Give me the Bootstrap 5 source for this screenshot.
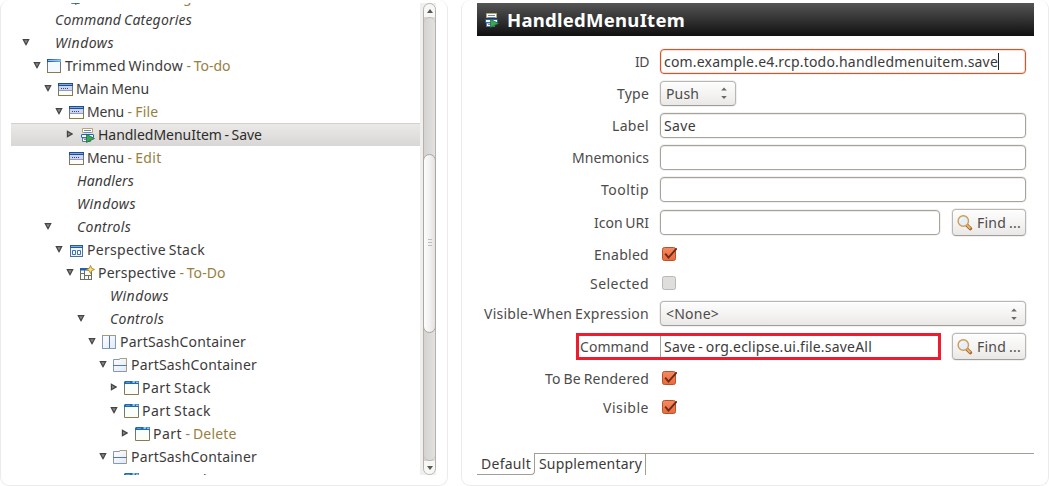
<!DOCTYPE html>
<html lang="en">
<head>
<meta charset="utf-8">
<meta name="viewport" content="width=device-width, initial-scale=1">
<title>Application model editor</title>
<link href="https://cdn.jsdelivr.net/npm/bootstrap@5.3.0/dist/css/bootstrap.min.css" rel="stylesheet">
<style>
body{font-family:"Noto Sans","Open Sans",sans-serif;font-size:14px;line-height:23px;word-spacing:-1px;color:#3c3b3a;background:#fff;height:486px}
.pane{border:1px solid #ebebeb;border-top:0;border-radius:9px;height:486px;background:#fff}
.pane-tree{width:448px;padding:3px 10px 10px 10px}
.pane-form{width:588px;margin-left:13px;padding:3px 14px 11px 15px}
.tree{width:409px;height:472px}
.tree-body{margin-top:-18px}
.tree-row{height:23px;white-space:pre}
.tree-row.active{background:linear-gradient(#ebeae9,#d9d7d5);box-shadow:inset 0 1px 0 #d2d1cf;color:#2d2c2b}
.arrow{width:8px;height:8px;margin:0 5px 2px 0}
.pic{width:16px;height:16px;margin-right:3px}
.fst-italic{padding-left:1px}
.dim{color:#97803f;margin-left:3.5px}
.scroller{width:16px;height:472px;background:#f0efee;padding-left:3px}
.track{width:13px;height:472px;border:1px solid #b5b1ac;border-radius:7px;background:linear-gradient(90deg,#d5d3d1,#e2e1df)}
.cap{height:13px;background:#f7f7f6;color:#5a5855}
.cap-up{border-radius:6px 6px 0 0}
.cap-down{border-radius:0 0 6px 6px}
.groove{height:444px;border:1px solid #bdbab6;border-width:1px 0;border-radius:6px;padding-top:136px;background:linear-gradient(90deg,#d5d3d1,#e2e1df)}
.thumb{height:179px;border:1px solid #aaa6a0;border-radius:7px;margin:0 -1px;background:linear-gradient(90deg,#fdfdfd,#f3f2f2 50%,#e3e1e0)}
.title-bar{height:33px;background:linear-gradient(#555,#101010);color:#fff;font-weight:700;font-size:18.5px;padding-left:6px;white-space:pre}
.form-area{padding-top:9px;height:417px}
.f-row{height:32px}
.h33{height:33px}.h30{height:30px}.h28{height:28px}
.f-label{width:172px;margin-right:11px;text-align:right;white-space:pre;color:#4c4b4a}
.field{width:366px;height:25px;border:1px solid #a5a49b;border-radius:4px;box-shadow:0 0 0 1px #f3f2f1,inset 0 1px 0 #ecebea;background:#fff;padding-left:3px;white-space:pre}
.field.short{width:280px}
.field.focus{border-color:#d0572b;box-shadow:0 0 0 1px #f3f2f1,inset 0 0 0 1px #fae0d6}
.caret{width:1px;height:17px;background:#222}
.combo,.find{border:1px solid #b9b7b3;border-bottom-color:#a09e9a;border-radius:4px;background:linear-gradient(#fdfdfd,#f3f2f1 60%,#e9e8e7);box-shadow:0 0 0 1px #f1f0ef,inset 0 1px 0 #fff;color:#4c4b4a;white-space:pre}
.combo{height:25px;width:366px;padding:0 7px 0 5px}
.combo.tiny{width:76px}
.find{width:74px;height:27px;margin-left:12px;padding-left:4px}
.find svg{margin-right:4px}
.tick{width:16px;height:16px;margin-left:1px}
.marked{height:27px;border:3px solid #ee1c2e;width:365px;margin-left:99px}
.marked + .find{margin-left:11px}
.marked .f-label{width:70px;margin-right:11px}
.marked .val{border-left:1px solid #a5a49b;height:21px;line-height:21px;padding-left:3px;white-space:pre}
.tabs{height:22px;white-space:pre}
.tab-on{width:58px;height:22px;line-height:21px;border:1px solid #a19e96;border-width:0 1px 1px 0;border-bottom-right-radius:4px;padding-left:4px}
.tab-off{width:111px;height:22px;line-height:20px;border:1px solid #a19e96;border-width:1px 1px 0 0;padding-left:4px}
.tab-rest{border-top:1px solid #a19e96}
</style>
</head>
<body class="d-flex overflow-hidden">

<svg width="0" height="0" class="position-absolute" aria-hidden="true">
  <defs>
    <linearGradient id="gBlue" x2="1" y2="0"><stop stop-color="#1c4f94"/><stop offset="1" stop-color="#6fb2e8"/></linearGradient>
    <linearGradient id="gEdge" x2="0" y2="1"><stop stop-color="#4a77a8"/><stop offset="1" stop-color="#8a7a4c"/></linearGradient>
    <linearGradient id="gPane" x2="1" y2="1"><stop stop-color="#fff"/><stop offset="1" stop-color="#dfe9f6"/></linearGradient>
    <linearGradient id="gOrange" x2="0" y2="1"><stop stop-color="#f58a62"/><stop offset="1" stop-color="#ea6a3c"/></linearGradient>
    <symbol id="down" viewBox="0 0 8 8"><path d="M.3 1h7.4L4.3 7.4h-.6z" fill="#444"/><path d="M2.2 2.2h3.6L4 5.6z" fill="#8a8886"/></symbol>
    <symbol id="right" viewBox="0 0 8 8"><path d="M.8.3v7.4L7 4.3v-.6z" fill="#444"/><path d="M2 2.4v3.2L4.9 4z" fill="#8a8886"/></symbol>
    <symbol id="window" viewBox="0 0 16 16"><rect x="1.5" y="1.5" width="13" height="13" fill="#f3faff" stroke="url(#gEdge)"/><path d="M1 1h14v3H1z" fill="url(#gBlue)"/><path d="M2 2h12v1H2z" fill="#8dc0ea"/></symbol>
    <symbol id="menu" viewBox="0 0 16 16"><rect x="1.5" y="2.5" width="14" height="12" fill="#fbfdf6" stroke="url(#gEdge)"/><path d="M1 2h15v3H1z" fill="#1e4e94"/><path d="M2 3h13v1H2z" fill="#78a9dc"/><path d="M2 5h13v5H2z" fill="#cfd3ee"/><path d="M2 9.5h13" stroke="#8f9cc4"/><path d="M4 7h1v1H4zM6 7h1v1H6zM8 7h1v1H8zM10 7h1v1h-1z" fill="#33437c"/></symbol>
    <symbol id="item" viewBox="0 0 16 16"><path d="M3.5 1.5h10v4h-10z" fill="#fff" stroke="#b8a76c"/><path d="M5 3h7v1H5zM5 5h7v1H5z" fill="#6d86bf"/><rect x="2.5" y="7.5" width="12" height="3" rx=".5" fill="#f4f8ff" stroke="#1e62b4"/><path d="M3.5 11v3.500h8v-3.500z" fill="#fff" stroke="#5e789e"/><path d="M5 12.500h3" stroke="#6d86bf"/><path d="M7.500 7.300l8 4.200-8 3.900z" fill="#3fa457" stroke="#16733a" stroke-width=".8"/></symbol>
    <symbol id="pstack" viewBox="0 0 16 16"><rect x="2.500" y="3.500" width="12" height="11" fill="#eef5fc" stroke="#4e7196"/><path d="M2 3h13v3H2z" fill="#255b9c"/><path d="M3 4h11v1H3z" fill="#7fb1e0"/><path d="M4.500 8.500h3v4h-3zM9.500 8.500h3v4h-3z" fill="#fff" stroke="#3e74ad"/></symbol>
    <symbol id="persp" viewBox="0 0 16 16"><rect x="1.500" y="3.500" width="11" height="11" fill="#f3f9ff" stroke="#6e7053"/><path d="M1 3h9v2.500H1z" fill="#2260ac"/><path d="M5.500 5v9.500M1.500 8.500h4M5.500 10.500h7M9.500 10v4.500" stroke="#6e7053" fill="none"/><path d="M11.500.5l1.200 2.800 2.800 1.200-2.800 1.200-1.200 2.800-1.200-2.800-2.800-1.200 2.800-1.200z" fill="#fbe38a" stroke="#b48413" stroke-width=".9"/></symbol>
    <symbol id="sashv" viewBox="0 0 16 16"><rect x="1.500" y="1.500" width="13" height="13" fill="url(#gPane)" stroke="#8498ba"/><path d="M1 1.500h14" stroke="#a59b76"/><path d="M8.500 2v12" stroke="#5878ae"/></symbol>
    <symbol id="sashh" viewBox="0 0 16 16"><path d="M1.500 2.500h6l1-1h6v13h-13z" fill="url(#gPane)" stroke="#8498ba"/><path d="M7.500 1.500h7v13" fill="none" stroke="#aca07b"/><path d="M1 8.500h14" stroke="#5878ae"/></symbol>
    <symbol id="part" viewBox="0 0 16 16"><path d="M1.500 2.500h14v12h-14z" fill="#fafdf8" stroke="url(#gEdge)"/><path d="M1 4V2l1-1h14v3z" fill="#2468ae"/><path d="M9.500 1h3l-1 2h-2zM13 1.500h2.500V3H13z" fill="#8dc9ee"/><path d="M3 2h4v1H3z" fill="#5799d2"/></symbol>
    <symbol id="lens" viewBox="0 0 16 16"><path d="M10 10.300l3.300 3.200" stroke="#a4682e" stroke-width="3.600" stroke-linecap="round"/><path d="M9.800 9.800l3.600 3.700" stroke="#e8b777" stroke-width="1.800"/><circle cx="6.300" cy="6" r="5.200" fill="#e4effb" stroke="#d19c52" stroke-width="1.400"/><path d="M3.500 5.500c.4-1.500 1.500-2.200 3-2.200" fill="none" stroke="#fff"/></symbol>
    <symbol id="check" viewBox="0 0 16 16"><rect x="1.500" y="1.500" width="13" height="13" rx="2" fill="url(#gOrange)" stroke="#b9512b"/><path d="M4.200 7.600l3.300 4L15.700 2.300" fill="none" stroke="#6b2c18" stroke-width="1.900"/></symbol>
    <symbol id="uncheck" viewBox="0 0 16 16"><rect x="1.500" y="1.500" width="13" height="13" rx="2" fill="#dfdedd" stroke="#bab8b5"/></symbol>
    <symbol id="updown" viewBox="0 0 8 14"><path d="M4 1.500l2.800 3H1.200zM4 13l2.800-3H1.200z" fill="#6a6865"/></symbol>
  </defs>
</svg>

<section class="pane pane-tree d-flex flex-shrink-0">
  <div class="tree overflow-hidden"><div class="tree-body" id="tree"></div></div>
  <div class="scroller">
    <div class="track">
      <div class="cap cap-up d-flex align-items-center justify-content-center"><svg width="6" height="4"><path d="M3 0l3 4H0z" fill="currentColor"/></svg></div>
      <div class="groove">
        <div class="thumb d-flex align-items-center justify-content-center"><svg width="4" height="9"><path d="M0 .5h4M0 3.500h4M0 6.500h4" stroke="#c0bebb"/></svg></div>
      </div>
      <div class="cap cap-down d-flex align-items-center justify-content-center"><svg width="6" height="4"><path d="M3 4l3-4H0z" fill="currentColor"/></svg></div>
    </div>
  </div>
</section>

<section class="pane pane-form flex-shrink-0">
  <header class="title-bar d-flex align-items-center"><svg width="16" height="16" class="me-2"><use href="#item"/></svg><span data-w="178">HandledMenuItem</span></header>
  <div class="form-area">
    <div class="f-row d-flex align-items-center"><label class="f-label"><span data-w="14">ID</span></label><div class="field focus d-flex align-items-center"><span data-w="334">com.example.e4.rcp.todo.handledmenuitem.save</span><i class="caret"></i></div></div>
    <div class="f-row d-flex align-items-center"><label class="f-label"><span data-w="32">Type</span></label><div class="combo tiny d-flex align-items-center justify-content-between"><span data-w="33">Push</span><svg width="8" height="14"><use href="#updown"/></svg></div></div>
    <div class="f-row d-flex align-items-center"><label class="f-label"><span data-w="37">Label</span></label><div class="field d-flex align-items-center"><span data-w="32">Save</span></div></div>
    <div class="f-row d-flex align-items-center"><label class="f-label"><span data-w="77">Mnemonics</span></label><div class="field"></div></div>
    <div class="f-row d-flex align-items-center"><label class="f-label"><span data-w="48">Tooltip</span></label><div class="field"></div></div>
    <div class="f-row h33 mt-px d-flex align-items-center" style="margin-top:1px"><label class="f-label"><span data-w="55">Icon URI</span></label><div class="field short"></div><div class="find d-flex align-items-center"><svg width="16" height="16"><use href="#lens"/></svg><span data-w="44">Find ...</span></div></div>
    <div class="f-row h30 d-flex align-items-center"><label class="f-label"><span data-w="55">Enabled</span></label><svg class="tick"><use href="#check"/></svg></div>
    <div class="f-row h28 d-flex align-items-center"><label class="f-label"><span data-w="59">Selected</span></label><svg class="tick"><use href="#uncheck"/></svg></div>
    <div class="f-row h33 d-flex align-items-center"><label class="f-label"><span data-w="165">Visible-When Expression</span></label><div class="combo d-flex align-items-center justify-content-between"><span data-w="53">&lt;None&gt;</span><svg width="8" height="14"><use href="#updown"/></svg></div></div>
    <div class="f-row h33 d-flex align-items-center"><div class="marked d-flex align-items-center"><label class="f-label"><span data-w="69">Command</span></label><div class="val"><span data-w="208">Save - org.eclipse.ui.file.saveAll</span></div></div><div class="find d-flex align-items-center"><svg width="16" height="16"><use href="#lens"/></svg><span data-w="44">Find ...</span></div></div>
    <div class="f-row h30 d-flex align-items-center"><label class="f-label"><span data-w="104">To Be Rendered</span></label><svg class="tick"><use href="#check"/></svg></div>
    <div class="f-row h28 d-flex align-items-center"><label class="f-label"><span data-w="46">Visible</span></label><svg class="tick"><use href="#check"/></svg></div>
  </div>
  <nav class="tabs d-flex"><div class="tab-on"><span data-w="50">Default</span></div><div class="tab-off"><span data-w="103">Supplementary</span></div><div class="tab-rest flex-grow-1"></div></nav>
</section>

<script src="https://cdn.jsdelivr.net/npm/bootstrap@5.3.0/dist/js/bootstrap.bundle.min.js"></script>
<script>
// [depth, arrow, icon, text, width, suffix, suffix width, selected]
const rows = [
  [3, '', 'item', 'Command', 68, '- org', 34],
  [0, '', '', 'Command Categories', 138],
  [0, 'down', '', 'Windows', 60],
  [1, 'down', 'window', 'Trimmed Window', 118, '- To-do', 44],
  [2, 'down', 'menu', 'Main Menu', 73],
  [3, 'down', 'menu', 'Menu', 37, '- File', 31],
  [4, 'right', 'item', 'HandledMenuItem - Save', 164, '', 0, true],
  [3, '', 'menu', 'Menu', 37, '- Edit', 34],
  [2, '', '', 'Handlers', 58],
  [2, '', '', 'Windows', 60],
  [2, 'down', '', 'Controls', 55],
  [3, 'down', 'pstack', 'Perspective Stack', 118],
  [4, 'down', 'persp', 'Perspective', 78, '- To-Do', 46],
  [5, '', '', 'Windows', 60],
  [5, 'down', '', 'Controls', 55],
  [6, 'down', 'sashv', 'PartSashContainer', 126],
  [7, 'down', 'sashh', 'PartSashContainer', 126],
  [8, 'right', 'part', 'Part Stack', 69],
  [8, 'down', 'part', 'Part Stack', 69],
  [9, 'right', 'part', 'Part', 29, '- Delete', 51],
  [7, 'down', 'sashh', 'PartSashContainer', 126],
  [8, '', 'part', 'Part Stack', 69]
];
document.getElementById('tree').innerHTML = rows.map(([d, a, i, t, w, s, sw, on]) =>
  `<div class="tree-row d-flex align-items-center${on ? ' active' : ''}" style="padding-left:${11 + 11 * d}px">` +
  `<svg class="arrow flex-shrink-0">${a ? `<use href="#${a}"/>` : ''}</svg>` +
  `<svg class="pic flex-shrink-0">${i ? `<use href="#${i}"/>` : ''}</svg>` +
  `<span class="${i ? '' : 'fst-italic'}" data-w="${w}">${t}</span>` +
  (s ? `<span class="dim" data-w="${sw}">${s}</span>` : '') + '</div>').join('');

// Track each caption so that it fills its nominal width.
document.querySelectorAll('[data-w]').forEach(el => {
  const gap = (el.dataset.w - el.getBoundingClientRect().width) / el.textContent.length;
  el.style.letterSpacing = gap.toFixed(3) + 'px';
});
</script>
</body>
</html>
